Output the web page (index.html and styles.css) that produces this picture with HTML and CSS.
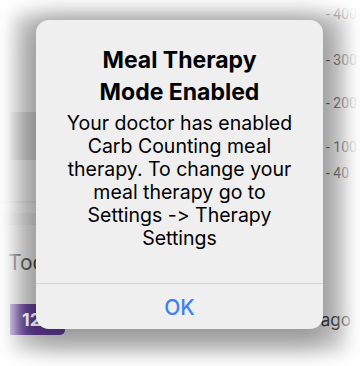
FILE: index.html
```html
<!DOCTYPE html>
<html>
<head>
<meta charset="utf-8">
<link rel="stylesheet" href="styles.css">
</head>
<body>
<div class="scene">
  <div class="app">
    <div class="top-area">
      <div class="left-strip">
        <div class="band band-dark"></div>
        <div class="band band-line"></div>
        <div class="band band-mid"></div>
      </div>
      <div class="axis">
        <span class="tick" style="top:6px">- 400</span>
        <span class="tick" style="top:52px">- 300</span>
        <span class="tick" style="top:95px">- 200</span>
        <span class="tick" style="top:139px">- 100</span>
        <span class="tick" style="top:165px">- 40</span>
      </div>
    </div>
    <div class="today">Today</div>
    <div class="entry">
      <span class="badge">12</span>
      <span class="ago">1 min ago</span>
    </div>
  </div>
  <div class="fade"></div>
  <div class="alert">
    <div class="alert-body">
      <h1 class="alert-title">Meal Therapy<br>Mode Enabled</h1>
      <p class="alert-msg">Your doctor has enabled<br>Carb Counting meal<br>therapy. To change your<br>meal therapy go to<br>Settings -&gt; Therapy<br>Settings</p>
    </div>
    <div class="alert-btn">OK</div>
  </div>
</div>
</body>
</html>
```

FILE: styles.css
```css
html, body {
  margin: 0;
  padding: 0;
  background: #ffffff;
}
body {
  width: 360px;
  height: 366px;
  overflow: hidden;
  font-family: Inter, "Noto Sans", "Liberation Sans", sans-serif;
  font-feature-settings: "calt" 0;
  font-variant-ligatures: none;
}
.scene {
  position: relative;
  width: 360px;
  height: 366px;
  overflow: hidden;
  background: #ffffff;
}
.app {
  width: 360px;
  height: 366px;
  background: #d3d3d3;
  display: flex;
  flex-direction: column;
}
.top-area {
  height: 250px;
  display: flex;
  justify-content: space-between;
}
.left-strip {
  width: 36px;
  display: flex;
  flex-direction: column;
  padding-top: 112px;
}
.band-dark {
  height: 48px;
  margin-left: 10px;
  background: #bcbcbc;
}
.band-line {
  height: 2px;
  margin-top: 41px;
  background: #c8c8c8;
}
.band-mid {
  height: 12px;
  margin-top: 10px;
  background: #cacaca;
}
.axis {
  position: relative;
  width: 37px;
}
.tick {
  position: absolute;
  left: 3px;
  font-family: Roboto, "Liberation Sans", sans-serif;
  font-size: 14px;
  line-height: 16px;
  color: #555555;
  white-space: nowrap;
}
.today {
  padding-left: 8px;
  font-size: 21px;
  line-height: 26px;
  color: #454545;
}
.entry {
  margin-top: 28px;
  display: flex;
  justify-content: space-between;
  align-items: flex-start;
  padding: 0 9px 0 10px;
}
.badge {
  width: 55px;
  height: 31px;
  background: #5b3a8e;
  border-radius: 0 0 5px 0;
  color: #ffffff;
  font-weight: 700;
  font-size: 18px;
  line-height: 31px;
  box-sizing: border-box;
  padding-left: 12px;
}
.ago {
  margin-top: 6px;
  font-size: 17px;
  line-height: 20px;
  color: #333333;
}
.fade {
  position: absolute;
  inset: 0;
  box-shadow: inset 0 0 18px 14px #ffffff;
  pointer-events: none;
}
.alert {
  position: absolute;
  left: 36px;
  top: 20px;
  width: 287px;
  height: 309px;
  box-sizing: border-box;
  background: #efefef;
  border-radius: 13px;
  box-shadow: 0 6px 26px 10px rgba(0, 0, 0, 0.28);
  display: flex;
  flex-direction: column;
}
.alert-body {
  flex: 1;
  padding: 24px 8px 0;
  text-align: center;
  color: #000000;
}
.alert-title {
  margin: 0;
  font-size: 23px;
  line-height: 32px;
  font-weight: 700;
}
.alert-msg {
  margin: 4px 0 0;
  font-size: 19.5px;
  line-height: 23px;
  font-weight: 400;
}
.alert-btn {
  height: 46px;
  border-top: 1px solid #d6d6d6;
  box-sizing: border-box;
  display: flex;
  align-items: center;
  justify-content: center;
  padding-top: 2px;
  font-size: 21px;
  font-weight: 500;
  color: #3a80f6;
}
```
